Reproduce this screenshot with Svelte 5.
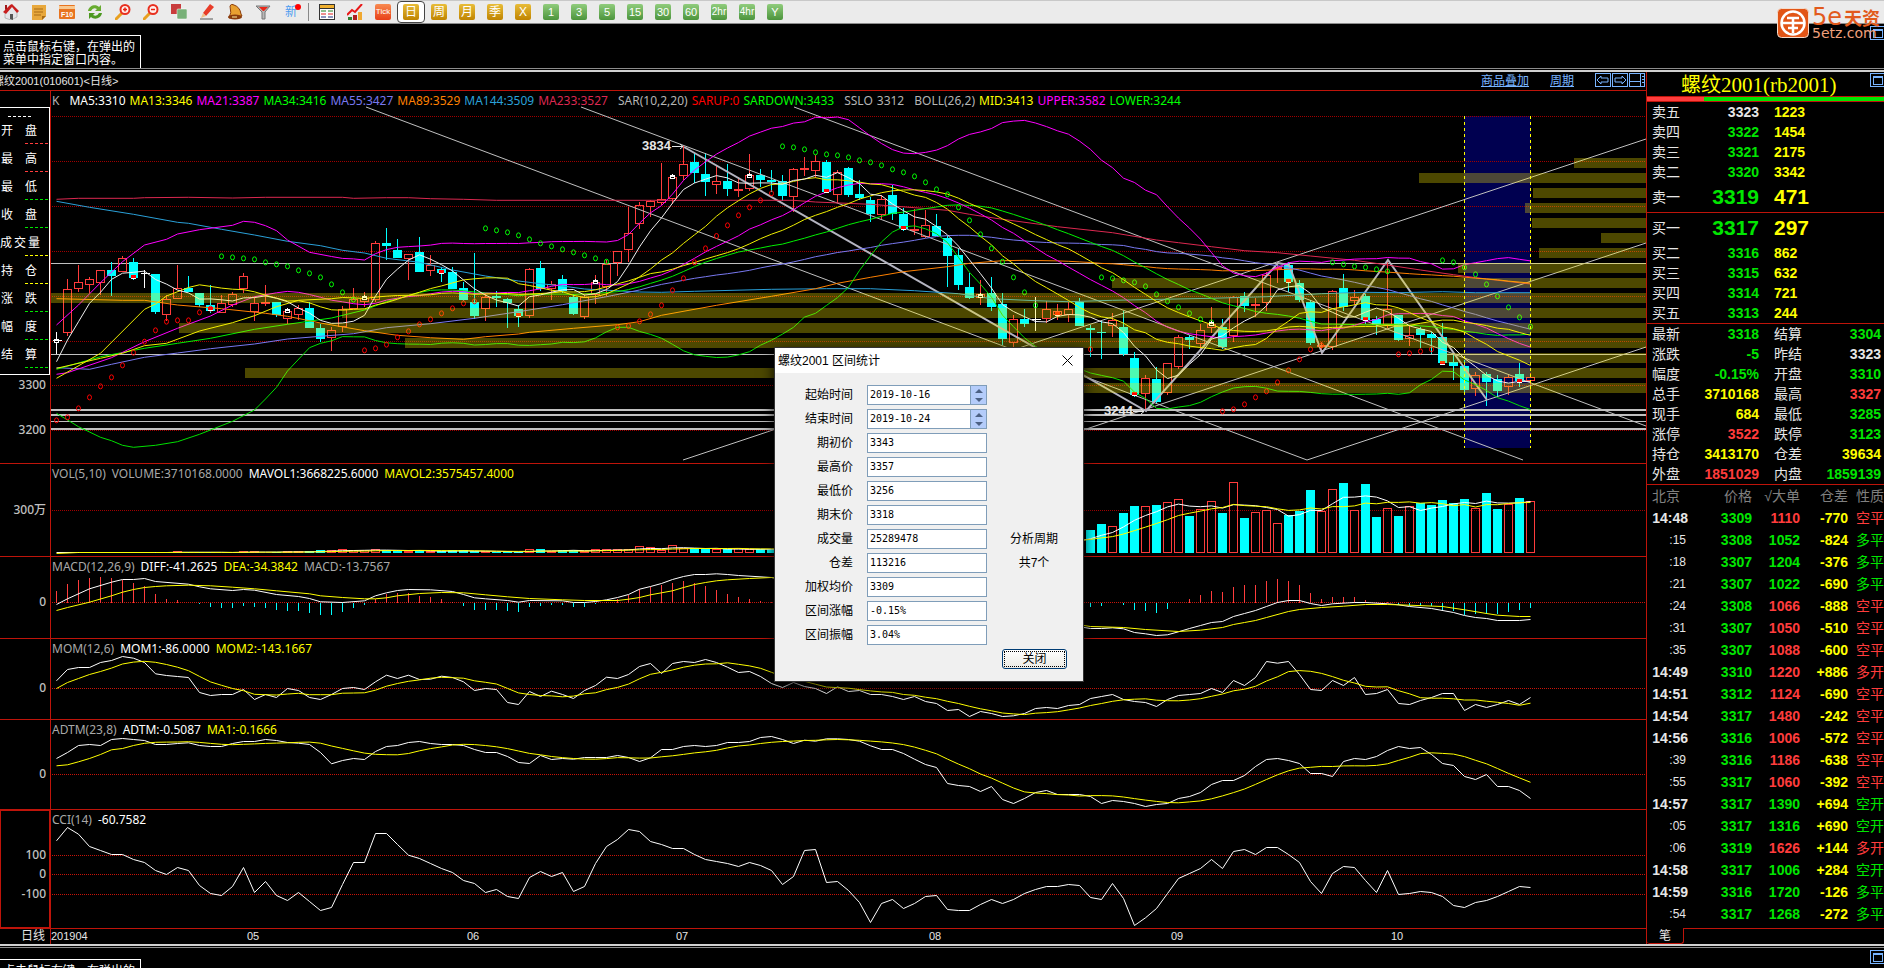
<script>
  // one bar every 11 units, heights are kept in thirds of a unit
  const STEP = 11
  const WIDTH = 1595
  const TOP = 11

  // u = up, d = down, w = unchanged; then high, body top, body bottom, low
  const candles = `w755,780,780,823 u597,628,758,768 u555,607,626,635 u590,598,616,640 u571,571,608,645
    d545,570,587,648 u528,535,575,575 d533,546,594,600 w571,580,580,624 d582,582,696,702
    u645,656,704,724 u555,625,656,656 d588,624,636,636 d640,640,674,682 d615,676,692,698
    u645,670,700,700 u636,643,676,682 u579,589,626,640 u652,670,695,722 u615,667,669,678
    d666,666,706,712 u690,694,716,732 u675,685,706,720 d666,684,744,744 d733,744,777,785
    u740,751,775,812 u678,688,742,756 u624,658,686,686 u636,655,665,680 u484,490,660,665
    d444,489,498,540 d477,510,535,535 u523,523,536,600 d471,516,576,576 u525,556,574,588
    d560,567,580,605 d562,576,628,628 d606,625,660,662 d519,666,708,716 u640,652,688,722
    d632,648,654,682 d654,657,668,744 d676,687,708,740 u563,568,707,714 d543,564,626,632
    u604,613,628,660 d585,598,634,640 d642,651,702,705 u642,652,710,718 u585,605,644,672
    u540,551,622,648 u514,514,550,588 u380,458,509,546 u366,376,433,446 u361,363,380,410
    u249,358,368,376 u285,292,358,372 u199,253,287,300 d220,246,279,310 d220,282,306,348
    u258,304,314,342 d253,303,327,348 u292,328,330,352 u222,284,328,332 d266,285,300,320
    d270,300,306,336 d285,302,348,362 u264,268,350,395 u232,264,266,288 u225,244,272,294
    d240,246,336,336 u270,277,344,368 d262,264,345,350 d300,342,353,360 d350,360,402,425
    u346,358,406,416 d316,345,402,420 d385,402,446,452 u388,446,452,466 u390,436,470,475
    d402,438,467,467 d467,474,528,621 d506,525,614,630 d580,621,654,656 u600,643,655,676
    d591,638,682,692 d640,672,777,795 u706,716,788,800 d686,717,732,742 w650,716,716,752
    u664,688,716,730 u673,694,704,720 u666,688,706,726 d655,666,738,738 d735,744,750,830
    d722,755,758,836 u700,720,738,770 d694,742,822,828 d815,834,944,950 u886,895,943,992
    d862,898,966,970 u850,850,940,946 u766,772,862,868 d764,771,780,806 u733,751,791,806
    u682,733,745,758 d718,741,801,806 u648,652,769,785 d636,648,678,696 u654,672,677,710
    u575,584,668,693 u545,562,568,608 d545,555,606,636 d600,609,660,666 d660,666,789,796
    u785,796,801,822 u630,634,800,810 d582,624,681,692 u630,652,662,675 d642,648,720,732
    d708,717,735,765 u545,688,735,745 d705,705,780,783 u736,766,776,798 d740,747,765,804
    d756,762,773,822 d729,771,850,855 d825,846,858,900 d840,858,930,944 u876,886,928,948
    d876,882,906,978 d886,898,933,948 u885,892,920,944 d850,882,902,920 u880,892,904,938`
    .trim().split(/\s+/).map(text => {
      const [high, top, bottom, low] = text.slice(1).split(',').map(Number)
      return { kind: text[0], high, top, bottom, low }
    })

  const closes = candles.map(c => (c.kind === 'u' ? c.top : c.bottom))

  const x = i => 5.5 + STEP * i
  const py = v => v / 3 - TOP
  const nums = text => text.trim().split(/[\s,]+/).map(Number)

  const toPath = (pairs, fy) => pairs.map(([i, v]) => `${x(i)},${fy(v).toFixed(1)}`).join(' ')
  const pairs = text => text.trim().split(/\s+/).map(p => p.split(':').map(Number))

  function average(list, i, n) {
    let sum = 0
    for (let k = i - n + 1; k <= i; k++) sum += list[k]
    return sum / n
  }

  // moving average, with a lead-in for the bars that have no full history
  function moving(list, n, lead, from = n - 1) {
    const out = pairs(lead)
    for (let i = from; i < list.length; i++) out.push([i, average(list, i, n)])
    return out
  }

  function band(side, lead) {
    const out = pairs(lead)
    for (let i = 25; i < closes.length; i++) {
      const mid = average(closes, i, 26)
      const spread = closes.slice(i - 25, i + 1).reduce((s, c) => s + (c - mid) ** 2, 0) / 26
      out.push([i, mid + side * 2 * Math.sqrt(spread)])
    }
    return out
  }

  const priceLines = [
    ['#dc2850', pairs('0:358 2:355 7:355 8:353 12:352 16:354 19:352 26:352 27:355 30:353 32:353 34:356 37:358 40:361 67:361 69:366 74:373 78:383 81:391 83:403 86:418 91:440 96:458 100:480 102:488 105:500 108:512 111:518 114:528 118:541 121:555 124:570 127:584 130:597 134:612')],
    ['#2aa0d8', pairs('0:364 3:382 7:403 11:427 12:430 15:448 18:465 21:484 24:497 26:511 28:519 30:535 33:547 36:570 39:588 42:603 44:611 46:618 48:627 53:636 55:637 58:634 65:628 70:626 74:626 78:632 82:641 85:656 89:662 92:665 96:661 105:655 110:650 115:641 119:637 122:638 126:635 129:638 134:638')],
    ['#ff8000', moving(closes, 89, '0:656 6:661 8:661 11:675 15:686 19:700 21:709 24:729 28:752 31:766 34:773 37:778 39:770 42:762 43:757 47:745 51:734 53:725 55:706 60:676 65:649 69:626 71:610 74:592 77:575 81:560 83:550 86:542 88:541', 91)],
    ['#7878f0', moving(closes, 55, '0:863 3:868 5:853 8:832 11:819 14:806 18:792 21:777 24:769 27:761 30:743 34:731 38:715 42:695 46:674 50:650 53:630')],
    ['#00f000', moving(closes, 34, '0:868 4:830 8:805 11:790 14:775 18:748 21:733 25:714 28:690 30:665')],
    ['#ff00ff', moving(closes, 21, '0:883 1:878 5:833 8:785 11:745 14:708 16:675 18:650')],
    ['#f0f000', moving(closes, 13, '0:895 4:820 8:688 9:672 10:648')],
    ['#f0f000', moving(closes, 26, '0:865 4:835 6:820 8:797 10:790 13:753 16:728 18:707 20:680 22:661')],
    ['#ff00ff', band(-1, '0:735 2:675 4:608 6:545 8:495 10:478 11:462 13:449 16:436 17:424 18:427 19:437 20:452 21:480 23:517')],
    ['#00e000', band(1, '0:1000 2:1040 4:1072 5:1082 6:1096 7:1102 9:1096 11:1085 13:1063 16:1024 18:990 19:957 20:922 21:873 23:803 24:790')],
    ['#f0f0f0', moving(closes, 5, '0:845 1:780 2:725 3:670')]
  ]

  // parabolic SAR runs: [first bar, colour, values]
  const sar = [
    [0, 'red', nums('1021 1012 985 952 919 892 856 818 785 751 725 721 721 697 686')],
    [15, 'lime', nums('529 532 535 538 547 553 559 571 580 592 613 637 659')],
    [28, 'red', nums('811 805 794 772 754 733 718 700 685 670 664')],
    [39, 'lime', nums('445 451 457 466 478 490 499 508 517 526 535 545')],
    [51, 'red', nums('742 738 724 703 676 631 595 547 505 468 436 406 382 361 340')],
    [66, 'lime', nums('199 202 208 217 223 226 232 241 247 256 268 277 289 307 328 343 382 421 463 505 545 592 637 676')],
    [94, 'red', nums('808')],
    [95, 'lime', nums('592 595 601 607 619 643 664 682 700 718 727')],
    [106, 'red', nums('994 988 973 952 934 907 871 838 808 796')],
    [116, 'lime', nums('547 553 559 562 568 574')],
    [122, 'red', nums('823 820 814 808')],
    [126, 'lime', nums('541 547 562 583 613 649 682 712 740')]
  ]

  // weekly marks: bar, height, red or white
  const marks = [
    [0, 782, 0], [7, 590, 1], [14, 688, 1], [21, 694, 0], [28, 653, 0], [35, 576, 1], [42, 704, 1],
    [49, 607, 0], [56, 292, 0], [63, 287, 0], [70, 333, 1], [77, 445, 1], [84, 648, 0], [91, 703, 1],
    [98, 943, 1], [105, 731, 0], [112, 604, 1], [119, 718, 1], [126, 848, 1], [133, 902, 1]
  ]

  // price distribution, left edge of every band
  const profile = [1523, 1368, 1482, 1474, 1481, 1550, 1488, 1407, 1061, 0, 291, 128, 354, 1389, 194, 849]
  const priceGrid = [25, 70, 115, 160, 205, 250, 294, 339]

  const levels = [[172, 1], [263, 1], [318, 2], [323, 2], [330, 1], [337, 2]]

  const trends = [
    [315, 16, 1256, 369], [530, 16, 1472, 369], [743, 16, 1595, 335],
    [632, 369, 1595, 48], [942, 369, 1595, 152], [1256, 369, 1595, 256]
  ]

  const swing = '633,56 1095,320 1227,172 1238,174 1271,262 1337,169 1436,309'

  const volumes = nums(`1 1 1 1 1 1 1 1 1 1 1 2 1 1 1 1 1 2 2 1 1 2 2 2 3 3 4 3 3 4 3 3 2 3 2 2 3 3 2 2 1
    2 1 4 4 2 3 3 2 4 4 4 4 7 6 3 8 5 5 4 4 4 5 4 4 4 4 5 5 6 6 7 7 8 8 8 9 9 10 10 11 12 12
    13 13 14 14 14 13 12 12 13 12 14 23 29 27 40 47 47 48 51 54 37 44 52 40 71 35 41 43 30 38 42
    63 42 64 70 43 69 36 45 37 47 50 48 53 50 54 45 60 44 49 55 52`).slice(-135)

  const macd = nums(`34 55 67 73 76 73 67 58 49 25 12 7 0 -5 -14 -17 -16 -11 -14 -16 -23 -26 -25 -31
    -38 -38 -29 -16 -8 10 25 28 28 19 16 10 2 -11 -22 -22 -22 -25 -29 -14 -11 -7 -8 -14 -13 -4 2
    10 24 40 46 52 58 64 58 49 37 25 16 10 4 1 0 0 0 0 0 0 0 0 0 0 0 0 0 0 0 0 0 0 0 0 0 0 0 0 0
    0 0 0 -13 -10 -2 -7 -22 -26 -31 -19 0 10 22 34 31 46 52 52 64 70 64 52 28 10 16 16 16 7 2 1
    -7 -11 -11 -11 -23 -26 -38 -34 -34 -35 -29 -23 -16`)

  const diff = pairs('0:-6 1:11 3:41 5:61 6:69 7:69 8:72 9:63 12:55 13:47 14:41 16:36 17:39 18:37 20:24 22:18 23:12 24:2 26:0 28:5 29:20 30:29 31:36 32:39 34:38 36:33 37:24 38:14 39:11 41:6 42:1 43:6 46:5 47:0 48:0 49:3 50:8 51:15 52:24 53:40 54:48 55:57 56:69 57:78 58:84 59:84 60:86 61:84 62:81 65:75 94:-78 95:-78 96:-76 97:-79 98:-90 99:-94 100:-99 101:-97 102:-88 103:-78 104:-69 105:-60 106:-57 107:-42 108:-33 109:-24 110:-12 111:0 112:6 113:6 114:-3 115:-9 116:-4 118:0 119:0 121:-4 122:-7 123:-12 125:-18 127:-30 128:-39 129:-45 130:-48 131:-54 133:-54 134:-51')
  const dea = pairs('0:-24 1:-15 3:1 5:20 6:31 7:39 8:45 9:48 10:50 12:52 14:50 16:46 18:41 20:35 23:26 24:20 26:15 28:11 29:11 30:14 31:20 33:27 35:30 37:29 39:23 41:17 43:12 46:8 48:6 51:6 52:10 53:15 54:23 55:29 56:35 57:45 58:54 59:60 60:65 61:68 63:72 65:75 94:-72 97:-75 99:-81 102:-87 104:-83 106:-75 107:-66 108:-60 109:-54 110:-45 112:-27 113:-21 115:-15 117:-11 119:-6 121:-6 123:-8 126:-12 128:-22 130:-33 131:-38 133:-42 134:-42')

  const mom = nums(`23 57 63 63 78 84 96 91 78 44 39 36 33 -12 -21 -18 -18 -3 -33 -18 -27 0 -6 -27 -33
    -18 0 3 -3 20 40 30 40 27 28 37 33 20 -6 0 -3 -42 -48 -9 -24 -8 -18 -30 -6 9 34 30 42 66 75 45
    75 81 78 87 78 64 48 51 36 15 3 18 6 0 -15 5 -9 -6 -18 -18 -24 -33 -24 -39 -45 -66 -63 -84 -69
    -75 -84 -82 -75 -60 -57 -60 -51 -48 -30 -24 -18 -33 -39 -42 -54 -33 -21 -18 -15 0 -12 24 9 33
    81 76 81 42 -3 -6 24 9 33 -18 -15 -3 -45 -48 -36 -27 -15 -15 -66 -48 -57 -48 -36 -48 -27`)

  const adtm = nums(`48 66 87 90 87 105 108 105 102 90 90 93 95 87 84 84 93 99 99 105 102 96 94 90 66 32
    42 48 45 69 84 87 96 99 93 90 90 87 75 66 66 54 36 33 57 45 48 46 51 51 51 57 51 39 50 75 75
    84 87 84 87 96 96 99 111 114 105 93 103 100 107 107 105 100 86 75 75 63 46 30 21 -27 -33 -36
    -51 -36 -75 -87 -72 -54 -48 -60 -60 -60 -66 -87 -78 -81 -87 -96 -90 -87 -72 -66 -54 -30 -18
    -18 -3 24 45 48 42 33 3 3 -6 39 48 45 54 72 84 78 81 60 33 27 -6 -15 0 -36 -36 -48 -72`)

  const cci = nums(`101 141 121 84 72 60 60 45 36 12 0 21 12 -33 -57 -63 -36 21 -54 -21 -63 -78 -54 -81
    -108 -99 -30 36 36 123 123 90 58 48 33 18 6 -18 -27 -54 -45 -66 -72 -9 9 -6 6 -51 -36 33 84
    105 135 129 99 90 78 78 60 45 39 33 24 36 27 12 -30 -6 72 75 -24 -21 -48 -84 -144 -87 -75
    -102 -87 -66 -63 -105 -108 -108 -90 -75 -87 -75 -57 -45 -36 -36 -30 -33 -69 -75 -27 -72 -153
    -130 -102 -57 -12 3 18 45 18 69 75 60 81 81 60 36 -21 -57 3 24 21 -18 -54 12 -60 -57 -51 -54
    -66 -93 -99 -84 -78 -66 -51 -36 -39`)

  const indexed = list => list.map((v, i) => [i, v])

  const indicators = [
    {
      id: 'vol', size: 92, grid: [46], ticks: [[46, '300万']],
      legend: [['VOL(5,10)', '#a8a8a8'], ['VOLUME:3710168.0000', '#a8a8a8'], ['MAVOL1:3668225.6000', '#fff'], ['MAVOL2:3575457.4000', '#ff0']],
      base: 89, unit: 1,
      lines: [['#fff', moving(volumes, 5, '0:1')], ['#ff0', moving(volumes, 10, '0:0 2:1')]]
    },
    {
      id: 'macd', size: 81, grid: [45], ticks: [[45, '0']],
      legend: [['MACD(12,26,9)', '#a8a8a8'], ['DIFF:-41.2625', '#fff'], ['DEA:-34.3842', '#ff0'], ['MACD:-13.7567', '#a8a8a8']],
      base: 45, unit: 3,
      lines: [['#fff', diff], ['#ff0', dea]]
    },
    {
      id: 'mom', size: 80, grid: [49], ticks: [[49, '0']],
      legend: [['MOM(12,6)', '#a8a8a8'], ['MOM1:-86.0000', '#fff'], ['MOM2:-143.1667', '#ff0']],
      base: 49, unit: 3,
      lines: [['#fff', indexed(mom)], ['#ff0', moving(mom, 6, '0:0 1:18 2:30 3:42 4:51')]]
    },
    {
      id: 'adtm', size: 89, grid: [54], ticks: [[54, '0']],
      legend: [['ADTM(23,8)', '#a8a8a8'], ['ADTM:-0.5087', '#fff'], ['MA1:-0.1666', '#ff0']],
      base: 54, unit: 3,
      lines: [['#fff', indexed(adtm)], ['#ff0', moving(adtm, 8, '0:26 1:29 2:38 3:48 4:60 5:74 6:78')]]
    },
    {
      id: 'cci', size: 118, grid: [45, 64, 84], ticks: [[45, '100'], [64, '0'], [84, '-100']],
      legend: [['CCI(14)', '#a8a8a8'], ['-60.7582', '#fff']],
      base: 64, unit: 3,
      lines: [['#fff', indexed(cci)]]
    }
  ]

  const mainLegend = [
    [['K', '#b4b4b4']],
    [['MA5:3310', '#fff'], ['MA13:3346', '#ff0'], ['MA21:3387', '#f0f'], ['MA34:3416', '#0f0'], ['MA55:3427', '#7878f0'],
      ['MA89:3529', '#ff8000'], ['MA144:3509', '#2aa0d8'], ['MA233:3527', '#dc2850']],
    [['SAR(10,2,20)', '#b4b4b4'], ['SARUP:0', '#f00'], ['SARDOWN:3433', '#0f0']],
    [['SSLO', '#b4b4b4'], ['3312', '#b4b4b4']],
    [['BOLL(26,2)', '#b4b4b4'], ['MID:3413', '#ff0'], ['UPPER:3582', '#f0f'], ['LOWER:3244', '#0f0']]
  ]

  const quoteBox = [
    ['开盘', '#ff3c3c'], ['最高', '#ff3c3c'], ['最低', '#00e600'], ['收盘', '#00e600'], ['成交量', '#ff0'],
    ['持仓', '#ff0'], ['涨跌', '#00e600'], ['幅度', '#00e600'], ['结算', '#00e600']
  ]

  const months = [['201904', 0], ['05', 196], ['06', 416], ['07', 625], ['08', 878], ['09', 1120], ['10', 1340]]

  const asks = [['卖五', 3323, 1223, 'plain'], ['卖四', 3322, 1454, 'down'], ['卖三', 3321, 2175, 'down'], ['卖二', 3320, 3342, 'down'], ['卖一', 3319, 471, 'down']]
  const bids = [['买一', 3317, 297], ['买二', 3316, 862], ['买三', 3315, 632], ['买四', 3314, 721], ['买五', 3313, 244]]

  const stats = [
    ['最新', '3318', 'down', '结算', '3304', 'down'],
    ['涨跌', '-5', 'down', '昨结', '3323', 'plain'],
    ['幅度', '-0.15%', 'down', '开盘', '3310', 'down'],
    ['总手', '3710168', 'amount', '最高', '3327', 'up'],
    ['现手', '684', 'amount', '最低', '3285', 'down'],
    ['涨停', '3522', 'up', '跌停', '3123', 'down'],
    ['持仓', '3413170', 'amount', '仓差', '39634', 'amount'],
    ['外盘', '1851029', 'up', '内盘', '1859139', 'down']
  ]

  const ticks = [
    ['14:48', 3309, 1110, '-770', '空平', 'up'],
    [':15', 3308, 1052, '-824', '多平', 'down'],
    [':18', 3307, 1204, '-376', '多平', 'down'],
    [':21', 3307, 1022, '-690', '多平', 'down'],
    [':24', 3308, 1066, '-888', '空平', 'up'],
    [':31', 3307, 1050, '-510', '空平', 'up'],
    [':35', 3307, 1088, '-600', '空平', 'up'],
    ['14:49', 3310, 1220, '+886', '多开', 'up'],
    ['14:51', 3312, 1124, '-690', '空平', 'up'],
    ['14:54', 3317, 1480, '-242', '空平', 'up'],
    ['14:56', 3316, 1006, '-572', '空平', 'up'],
    [':39', 3316, 1186, '-638', '空平', 'up'],
    [':55', 3317, 1060, '-392', '空平', 'up'],
    ['14:57', 3317, 1390, '+694', '空开', 'down'],
    [':05', 3317, 1316, '+690', '空开', 'down'],
    [':06', 3319, 1626, '+144', '多开', 'up'],
    ['14:58', 3317, 1006, '+284', '空开', 'down'],
    ['14:59', 3316, 1720, '-126', '多平', 'down'],
    [':54', 3317, 1268, '-272', '多平', 'down']
  ]

  let dates = [
    { id: 'from', label: '起始时间', value: '2019-10-16' },
    { id: 'to', label: '结束时间', value: '2019-10-24' }
  ]
  const results = [
    ['期初价', '3343'], ['最高价', '3357'], ['最低价', '3256'], ['期末价', '3318'], ['成交量', '25289478'],
    ['仓差', '113216'], ['加权均价', '3309'], ['区间涨幅', '-0.15%'], ['区间振幅', '3.04%']
  ]

  const periods = ['日', '周', '月', '季', 'X']
  const minutes = ['1', '3', '5', '15', '30', '60', '2hr', '4hr', 'Y']

  let period = '日'
  let open = true

  function shiftDay(row, days) {
    const day = new Date(row.value)
    day.setDate(day.getDate() + days)
    row.value = day.toISOString().slice(0, 10)
    dates = dates
  }
</script>

<div class="app">
  <header class="toolbar">
    <button class="tool" aria-label="首页">
      <svg viewBox="0 0 16 16"><path d="M2 8v6l6 2 6-3V7L9 2z" fill="#e4e4e8" stroke="#888" stroke-width=".5"/><path d="M0 8 7 1l2-1 7 7-2 2-5-6-6 7z" fill="#c81e1e"/><path d="M2 1h2v4L2 6z" fill="#a01818"/><path d="M7 10h3v6l-3-1z" fill="#555"/></svg>
    </button>
    <button class="tool" aria-label="资讯">
      <svg viewBox="0 0 16 16"><path d="M1 1h14v11l-4 4H1z" fill="#e8a83c"/><path d="M15 12h-4v4z" fill="#a86a14"/><path d="M3 5h9M3 8h9M3 11h7" stroke="#a86a14"/></svg>
    </button>
    <button class="tool" aria-label="F10">
      <svg viewBox="0 0 16 16"><rect y="1" width="16" height="14" rx="1" fill="#e87420"/><path d="M0 2h16v3H0z" fill="#f8c890"/><text x="8" y="13" class="tiny">F10</text></svg>
    </button>
    <button class="tool" aria-label="刷新">
      <svg viewBox="0 0 16 16"><path d="M1 7C2 1 9 0 12 3l2-2v6H8l2-2Q6 3 4 7z" fill="#68ac30"/><path d="M15 9c-1 6-8 7-11 4l-2 2V9h6l-2 2q4 2 6-2z" fill="#4c9820"/></svg>
    </button>
    {#each ['放大', '缩小'] as name}
      <button class="tool" aria-label={name}>
        <svg viewBox="0 0 16 16"><path d="m1 15 6-6" stroke="#e8a020" stroke-width="3" stroke-linecap="round"/><circle cx="10" cy="5.500" r="4.500" fill="#fff0ec" stroke="#e83020" stroke-width="2"/><path d={name === '放大' ? 'M8 5.500h4M10 3.500v4' : 'M8 5.500h4'} stroke="#e82010" stroke-width="1.500"/></svg>
      </button>
    {/each}
    <button class="tool" aria-label="叠加">
      <svg viewBox="0 0 16 16"><rect width="10" height="10" fill="#c83c3c"/><rect x="6" y="5" width="10" height="10" rx="1" fill="#78b078" stroke="#fff" stroke-width=".5"/></svg>
    </button>
    <button class="tool" aria-label="画线">
      <svg viewBox="0 0 16 16"><path d="M4 9 11 0l4 3-8 9z" fill="#e83c28"/><path d="m4 9 3 3-5 2z" fill="#f0c088"/><path d="M1 15h13" stroke="#888" stroke-width="1.500"/></svg>
    </button>
    <button class="tool" aria-label="预警">
      <svg viewBox="0 0 16 16"><path d="M3 2q1-3 4-1 6 2 7 9l1 2-13 2q3-5 1-12z" fill="#e8a030" stroke="#8a3c0c"/><ellipse cx="8" cy="13" rx="7" ry="2.500" fill="#8a3c0c"/><path d="M5 13h5" stroke="#fff0a0"/></svg>
    </button>
    <button class="tool" aria-label="筛选">
      <svg viewBox="0 0 16 16"><path d="M1 2h14l-5 6v7H7V8z" fill="#b8b8b8" stroke="#777"/><path d="M4 3h9L9 7H8z" fill="#e82818"/></svg>
    </button>
    <button class="tool news">新<i></i></button>
    <span class="divider"></span>
    <button class="tool" aria-label="报价">
      <svg viewBox="0 0 16 16"><rect x=".5" y=".5" width="15" height="15" fill="#fff" stroke="#333"/><path d="M1 1h14v3H1z" fill="#f0b030"/><path d="M1 4.500h14" stroke="#333"/><path d="M2 7h5M9 7h5" stroke="#208020"/><path d="M2 10h5M9 10h5" stroke="#e02020"/><path d="M2 13h5M9 13h5" stroke="#203080"/></svg>
    </button>
    <button class="tool" aria-label="走势">
      <svg viewBox="0 0 16 16"><path d="M1 13h4v3H1z" fill="#308030"/><path d="M6 11h4v5H6z" fill="#b02020"/><path d="M11 8h4v8h-4z" fill="#f0a830"/><path d="m0 11 5-5 3 2 7-8" fill="none" stroke="#e81818" stroke-width="2"/></svg>
    </button>
    <button class="tool"><span class="chip tick">Tick</span></button>
    {#each periods as name}
      <button class="tool" class:active={period === name} on:click={() => (period = name)}>
        <span class="chip gold">{name}</span>
      </button>
    {/each}
    {#each minutes as name}
      <button class="tool" class:active={period === name} on:click={() => (period = name)}>
        <span class="chip green" class:long={name.length > 2}>{name}</span>
      </button>
    {/each}
  </header>

  <div class="strip top">
    <p class="hint">点击鼠标右键，在弹出的<br>菜单中指定窗口内容。</p>
    <button class="restore" aria-label="还原"></button>
  </div>

  <div class="splitter"></div>

  <main class="work">
    <section class="charts">
      <div class="head">
        <span class="symbol">螺纹2001(010601)&lt;日线&gt;</span>
        <nav class="links">
          <a href="/">商品叠加</a>
          <a href="/">周期</a>
          <span class="boxes">
            <button aria-label="向左"><svg viewBox="0 0 14 12"><path d="M1 6 5 2v2h7v4H5v2z"/></svg></button>
            <button aria-label="向右"><svg viewBox="0 0 14 12"><path d="M13 6 9 2v2H2v4h7v2z"/></svg></button>
            <button aria-label="分栏"><svg viewBox="0 0 14 12"><path d="M0 7.500h10M10.500 0v12M12 2.500h2M12 5.500h2M12 8.500h2"/></svg></button>
          </span>
        </nav>
      </div>

      <div class="panel" style="flex-grow: 372">
        <div class="axis">
          <div class="quotes">
            <span class="stamp"></span>
            {#each quoteBox as [name, color]}
              <div class="quote" class:wide={name.length > 2}>
                <span class="name">{#each name as letter}<b>{letter}</b>{/each}</span>
                <span class="dash" style="border-color: {color}"></span>
              </div>
            {/each}
          </div>
          <span class="mark" style="top: {294 / 372 * 100}%">3300</span>
          <span class="mark" style="top: {339 / 372 * 100}%">3200</span>
        </div>
        <div class="plot">
          <svg viewBox="0 0 {WIDTH} 372" preserveAspectRatio="none">
            <rect x="1413" y="25" width="67" height="332" fill="#000050"/>
            <g class="crisp">
              {#each priceGrid as y}
                <line x1="1" x2={WIDTH} y1={y + .5} y2={y + .5} class="grid dim"/>
              {/each}
              {#each levels as [y, h]}
                <rect x="0" {y} width={WIDTH} height={h} fill="#c0c0c0"/>
              {/each}
              {#each candles as c, i}
                {@const top = Math.round(py(c.top))}
                {@const height = Math.max(1, Math.round(py(c.bottom)) - top)}
                {#if c.kind === 'u'}
                  <path d="M{x(i)} {py(c.high)}V{top}M{x(i)} {top + height}V{py(c.low)}" stroke="#ff3c3c"/>
                  <rect x={x(i) - 4} y={top + .5} width="8" height={Math.max(1, height - 1)} fill="none" stroke="#ff3c3c"/>
                {:else if c.kind === 'd'}
                  <path d="M{x(i)} {py(c.high)}V{py(c.low)}" stroke="#0ff"/>
                  <rect x={x(i) - 4.5} y={top} width="9" {height} fill="#0ff"/>
                {:else}
                  <path d="M{x(i)} {py(c.high)}V{py(c.low)}M{x(i) - 4} {top + .5}h9" stroke="#fff"/>
                {/if}
              {/each}
            </g>
            {#each trends as [x1, y1, x2, y2]}
              <line {x1} {y1} {x2} {y2} class="trend"/>
            {/each}
            <polyline points={swing} class="swing"/>
            {#each priceLines as [stroke, line]}
              <polyline points={toPath(line, py)} {stroke} class="curve"/>
            {/each}
            {#each sar as [start, stroke, values]}
              {#each values as v, k}
                <ellipse cx={x(start + k)} cy={py(v)} rx="2" ry="2.500" fill="none" {stroke}/>
              {/each}
            {/each}
            <g class="crisp">
              {#each marks as [i, v, hot]}
                {@const y = Math.round(py(v))}
                <rect x={x(i) - 2.5} y={y - 2} width="5" height="4" fill="#fff"/>
                {#if hot}
                  <rect x={x(i) - 2.5} y={y - 2} width="5" height="3" fill="#f00"/>
                {:else}
                  <rect x={x(i) - .5} y={y - 3} width="1" height="1" fill="#fff"/>
                  <rect x={x(i) - 1.5} {y} width="3" height="1" fill="#000"/>
                {/if}
              {/each}
            </g>
            {#each profile as left, k}
              <rect x={left} y={67 + 15 * k} width={WIDTH - left} height="10" class="band"/>
            {/each}
            <path d="M1413.500 25v332M1479.500 25v332" stroke="#ff0" stroke-dasharray="3 3" class="crisp"/>
            <path d="M621 55.500h11M629 53l3 2.500-3 2.500M1082 320.500h11M1090 318l3 2.500-3 2.500" class="arrow"/>
          </svg>
          <span class="peak" style="left: {591 / WIDTH * 100}%; top: {55 / 372 * 100}%">3834</span>
          <span class="peak" style="left: {1053 / WIDTH * 100}%; top: {320 / 372 * 100}%">3244</span>
          <div class="legend">
            {#each mainLegend as group}
              <span class="group">{#each group as [text, color]}<span style="color: {color}">{text}</span>{/each}</span>
            {/each}
          </div>
        </div>
      </div>

      {#each indicators as panel}
        <div class="panel" class:selected={panel.id === 'cci'} style="flex-grow: {panel.size}">
          <div class="axis">
            {#each panel.ticks as [y, text]}
              <span class="mark" style="top: {y / panel.size * 100}%">{text}</span>
            {/each}
          </div>
          <div class="plot">
            <svg viewBox="0 0 {WIDTH} {panel.size}" preserveAspectRatio="none">
              <g class="crisp">
                {#each panel.grid as y}
                  <line x1="1" x2={WIDTH} y1={y + .5} y2={y + .5} class="grid" class:dim={panel.id === 'vol'}/>
                {/each}
                {#if panel.id === 'vol'}
                  {#each volumes as v, i}
                    {#if candles[i].kind === 'd'}
                      <rect x={x(i) - 4.5} y={89 - v} width="9" height={v} fill="#0ff"/>
                    {:else}
                      <rect x={x(i) - 4} y={89.5 - v} width="8" height={Math.max(0, v - 1)} fill="none" stroke="#ff3c3c"/>
                    {/if}
                  {/each}
                {:else if panel.id === 'macd'}
                  {#each macd as v, i}
                    {#if v}
                      <path d="M{x(i)} 45.500v{-v / 3}" stroke={v > 0 ? '#ff3c3c' : '#0ff'}/>
                    {/if}
                  {/each}
                {/if}
              </g>
              {#each panel.lines as [stroke, line]}
                <polyline points={toPath(line, v => panel.base + .5 - v / panel.unit)} {stroke} class="curve"/>
              {/each}
            </svg>
            <div class="legend">
              <span class="group loose">{#each panel.legend as [text, color]}<span style="color: {color}">{text}</span>{/each}</span>
            </div>
          </div>
        </div>
      {/each}

      <div class="dates">
        <span class="axis">日线</span>
        <div class="plot">
          {#each months as [text, left]}
            <span style="left: {left / WIDTH * 100}%">{text}</span>
          {/each}
        </div>
      </div>
    </section>

    <aside class="side">
      <h1>螺纹<span>2001(rb2001)</span><button class="restore" aria-label="还原"></button></h1>
      <div class="ratio"><i></i></div>
      <table class="depth">
        <tbody>
          {#each asks as [name, price, lots, tone], k}
            <tr class:best={k === 4}><th>{name}</th><td class={tone}>{price}</td><td class="lots">{lots}</td></tr>
          {/each}
        </tbody>
      </table>
      <table class="depth">
        <tbody>
          {#each bids as [name, price, lots], k}
            <tr class:best={k === 0}><th>{name}</th><td class="down">{price}</td><td class="lots">{lots}</td></tr>
          {/each}
        </tbody>
      </table>
      <table class="stats">
        <tbody>
          {#each stats as [a, va, ta, b, vb, tb]}
            <tr><th>{a}</th><td class={ta}>{va}</td><th>{b}</th><td class={tb}>{vb}</td></tr>
          {/each}
        </tbody>
      </table>
      <table class="tape">
        <thead>
          <tr><th>北京</th><th>价格</th><th>√大单</th><th>仓差</th><th>性质</th></tr>
        </thead>
        <tbody>
          {#each ticks as [time, price, lots, change, nature, tone]}
            <tr>
              <td class:minor={time.length === 3}>{time}</td>
              <td class="down">{price}</td>
              <td class={tone}>{lots}</td>
              <td class="amount">{change}</td>
              <td class={tone}>{nature}</td>
            </tr>
          {/each}
        </tbody>
      </table>
      <div class="tabs"><button>笔</button><span></span></div>
    </aside>
  </main>

  <div class="splitter bottom"></div>

  <div class="strip">
    <p class="hint">点击鼠标右键，在弹出的<br>菜单中指定窗口内容。</p>
    <button class="restore" aria-label="还原"></button>
  </div>

  <div class="logo">
    <svg viewBox="0 0 32 30" width="32" height="30">
      <rect x=".5" y=".5" width="31" height="29" rx="4" fill="#e25516" stroke="#f4dccc"/>
      <circle cx="16" cy="15" r="11.500" fill="none" stroke="#fff" stroke-width="2.500"/>
      <path d="M10 10h12M5 15h22M16 10v15M11 20h10" fill="none" stroke="#fff" stroke-width="2.500"/>
    </svg>
    <div>
      <p class="brand"><span>5e</span>天资</p>
      <p class="site">5etz.com</p>
    </div>
  </div>

  {#if open}
    <div class="dialog" role="dialog" aria-label="螺纹2001 区间统计">
      <div class="caption">
        <span>螺纹2001 区间统计</span>
        <button aria-label="关闭窗口" on:click={() => (open = false)}>
          <svg viewBox="0 0 11 11" width="11" height="11"><path d="m.5.5 10 10M10.500.5l-10 10" stroke="#000" fill="none"/></svg>
        </button>
      </div>
      <div class="form">
        {#each dates as row}
          <div class="row">
            <label for={row.id}>{row.label}</label>
            <span class="field">
              <input id={row.id} bind:value={row.value}>
              <span class="spin">
                <button aria-label="后一天" on:click={() => shiftDay(row, 1)}><svg viewBox="0 0 8 4"><path d="m0 4 4-4 4 4z"/></svg></button>
                <button aria-label="前一天" on:click={() => shiftDay(row, -1)}><svg viewBox="0 0 8 4"><path d="m0 0 4 4 4-4z"/></svg></button>
              </span>
            </span>
          </div>
        {/each}
        {#each results as [name, value], k}
          <div class="row">
            <label for="result{k}">{name}</label>
            <span class="field"><input id="result{k}" readonly {value}></span>
            {#if k === 4}<span class="note">分析周期</span>{/if}
            {#if k === 5}<span class="note">共7个</span>{/if}
          </div>
        {/each}
      </div>
      <button class="close" on:click={() => (open = false)}><span>关闭</span></button>
    </div>
  {/if}
</div>

<style>
  :global(body) {
    margin: 0;
    background: #000;
  }

  .app {
    position: relative;
    display: flex;
    flex-direction: column;
    height: 100vh;
    min-height: 720px;
    overflow: hidden;
    background: #000;
    color: #e6e6e6;
    font: 12px/14px "Liberation Sans", "Noto Sans CJK SC", sans-serif;
  }

  p,
  h1 {
    margin: 0;
  }

  button {
    padding: 0;
    border: 0;
    background: none;
    color: inherit;
    font: inherit;
  }

  .crisp {
    shape-rendering: crispEdges;
  }

  /* toolbar */
  .toolbar {
    display: flex;
    flex: none;
    box-sizing: border-box;
    height: 24px;
    padding-right: 120px;
    margin-left: -3px;
    border-top: 1px solid #c8c8c8;
    border-bottom: 1px solid #8c8c8c;
    background: #ebebeb;
  }

  .tool {
    position: relative;
    display: flex;
    flex: none;
    align-items: center;
    justify-content: center;
    box-sizing: border-box;
    width: 28px;
    height: 22px;
  }

  .tool svg {
    width: 16px;
    height: 16px;
  }

  .tool.active {
    border: 1px solid #444;
    border-radius: 4px;
    background: #fff;
  }

  .tiny {
    fill: #fff;
    font: bold 7px "Liberation Sans", sans-serif;
    text-anchor: middle;
  }

  .news {
    color: #4c9cf0;
  }

  .news i {
    position: absolute;
    top: 3px;
    right: 4px;
    width: 6px;
    height: 6px;
    border-radius: 50%;
    background: #f00;
  }

  .divider {
    width: 1px;
    height: 18px;
    margin: 2px 4px 0 3px;
    background: #888;
  }

  .chip {
    width: 16px;
    height: 16px;
    border-radius: 2px;
    color: #fff;
    font: 11px/16px "Liberation Sans", "Noto Sans CJK SC", sans-serif;
    text-align: center;
    white-space: nowrap;
  }

  .tick {
    background: linear-gradient(#f88a50, #e84018);
    font-size: 8px;
  }

  .gold {
    background: linear-gradient(#e8bc38, #c08400);
    font-size: 12px;
  }

  .green {
    background: linear-gradient(#90cc7c, #4c943c);
  }

  .green.long {
    font-size: 10px;
  }

  /* empty windows above and below */
  .strip {
    position: relative;
    flex: none;
    height: 20px;
    overflow: hidden;
  }

  .strip.top {
    height: 44px;
  }

  .hint {
    box-sizing: border-box;
    width: 141px;
    height: 33px;
    padding: 5px 0 0 3px;
    margin-top: 11px;
    border: solid #fff;
    border-width: 1px 1px 0 0;
    color: #fff;
    line-height: 13px;
    white-space: nowrap;
  }

  .restore {
    position: absolute;
    top: 2px;
    right: -2px;
    box-sizing: border-box;
    width: 16px;
    height: 14px;
    border: 1px solid #78b4ff;
  }

  .restore::after {
    content: '';
    position: absolute;
    top: 2px;
    left: 2px;
    width: 8px;
    height: 6px;
    border: 1px solid #78b4ff;
    border-top-width: 2px;
  }

  .splitter {
    flex: none;
    height: 1px;
    border-top: 1px solid #8c8c8c;
    border-bottom: 2px solid #d0d0d0;
  }

  .splitter.bottom {
    border-top: 2px solid #d0d0d0;
    border-bottom: 1px solid #8c8c8c;
  }

  .work {
    display: grid;
    flex: 1;
    grid-template-columns: minmax(0, 1fr) 238px;
    min-height: 0;
  }

  /* charts */
  .charts {
    display: flex;
    flex-direction: column;
    min-height: 0;
  }

  .head {
    display: flex;
    flex: none;
    justify-content: space-between;
    height: 18px;
    border-bottom: 1px solid #be140a;
    line-height: 18px;
  }

  .symbol {
    margin-left: -7px;
    font-size: 11px;
  }

  .links {
    display: flex;
    gap: 21px;
    padding-right: 1px;
  }

  .links a {
    color: #78b4ff;
  }

  .boxes {
    display: flex;
    gap: 1px;
    padding-top: 1px;
  }

  .boxes button {
    box-sizing: border-box;
    width: 16px;
    height: 14px;
    border: 1px solid #78b4ff;
  }

  .boxes svg {
    display: block;
    width: 14px;
    height: 12px;
    fill: none;
    stroke: #78b4ff;
  }

  /* every panel grows by its own share on top of the 1px rule */
  .panel {
    display: flex;
    flex-basis: 0;
    flex-shrink: 1;
    box-sizing: border-box;
    min-height: 0;
    border-bottom: 1px solid #be140a;
  }

  .axis {
    position: relative;
    flex: none;
    width: 50px;
    border-right: 1px solid #be140a;
    color: #c0c0c0;
  }

  .selected .axis {
    box-shadow: inset 0 0 0 1px #be140a;
  }

  .plot {
    position: relative;
    flex: 1;
    min-width: 0;
  }

  .plot svg {
    display: block;
    position: absolute;
    width: 100%;
    height: 100%;
  }

  .mark {
    position: absolute;
    right: 4px;
    font: 500 12px/14px "Noto Sans", "Noto Sans CJK SC", sans-serif;
    transform: translateY(-50%);
    white-space: nowrap;
  }

  .grid {
    stroke: #c8140a;
    stroke-dasharray: 1 1;
  }

  .grid.dim {
    stroke: #a00000;
  }

  .curve {
    fill: none;
    stroke-width: 1;
  }

  .trend {
    stroke: #c0c0c0;
  }

  .swing {
    fill: none;
    stroke: #b4b4c0;
    stroke-width: 2;
  }

  .band {
    fill: rgba(255, 240, 0, .3);
  }

  .arrow {
    fill: none;
    stroke: #e6e6e6;
  }

  .peak {
    position: absolute;
    font: bold 13px/14px "Liberation Sans", sans-serif;
    transform: translateY(-50%);
  }

  .legend {
    position: absolute;
    top: 2px;
    left: 1px;
    display: flex;
    gap: 10px;
    font: 12px/16px "Noto Sans", sans-serif;
    white-space: nowrap;
  }

  .group {
    display: flex;
    gap: 4px;
  }

  .group.loose {
    gap: 6px;
  }

  .quotes {
    box-sizing: border-box;
    height: 268px;
    margin-top: 16px;
    border: solid #fff;
    border-width: 1px 1px 1px 0;
    color: #fff;
  }

  .stamp {
    display: block;
    width: 23px;
    height: 8px;
    margin-left: 8px;
    border-bottom: 1px dashed #fff;
  }

  .quote {
    display: flex;
    flex-direction: column;
    height: 28px;
  }

  .name {
    display: flex;
    justify-content: space-between;
    width: 36px;
    padding: 7px 0 5px 1px;
  }

  .wide .name {
    width: 40px;
    padding-left: 0;
  }

  .name b {
    font-weight: normal;
  }

  .dash {
    width: 23px;
    margin-left: 25px;
    border-top: 1px dashed;
  }

  .dates {
    display: flex;
    flex: none;
    height: 15px;
    font-size: 11px;
    line-height: 14px;
  }

  .dates .axis {
    box-sizing: border-box;
    width: 51px;
    padding-right: 5px;
    color: #e6e6e6;
    font-size: 12px;
    text-align: right;
  }

  .dates .plot span {
    position: absolute;
  }

  /* quote side */
  .side {
    display: flex;
    flex-direction: column;
    min-width: 0;
    border-left: 1px solid #be140a;
  }

  h1 {
    position: relative;
    flex: none;
    height: 24px;
    padding-left: 34px;
    color: #ff0;
    font: 20px/24px "Noto Sans CJK SC", sans-serif;
    white-space: nowrap;
  }

  h1 span {
    font-family: "Liberation Serif", serif;
    font-size: 21px;
  }

  h1 .restore {
    top: 1px;
  }

  .ratio {
    flex: none;
    height: 4px;
    border: solid #be140a;
    border-width: 1px 0;
    background: #00e600;
  }

  .ratio i {
    display: block;
    width: 24%;
    height: 4px;
    background: #ff3c3c;
  }

  table {
    flex: none;
    width: 100%;
    border-spacing: 0;
    table-layout: fixed;
  }

  td,
  th {
    box-sizing: border-box;
    height: 20px;
    padding: 0;
    font: bold 14px/20px "Liberation Sans", "Noto Sans CJK SC", sans-serif;
    text-align: right;
    white-space: nowrap;
  }

  th {
    padding-left: 5px;
    font-weight: normal;
    text-align: left;
  }

  .depth,
  .stats {
    border-bottom: 1px solid #be140a;
  }

  .depth th,
  .stats th:first-child {
    width: 48px;
  }

  .depth td:nth-child(2),
  .stats td:nth-child(2) {
    width: 64px;
  }

  .depth .lots {
    padding-left: 15px;
    text-align: left;
  }

  .best td,
  .best th {
    height: 30px;
    line-height: 30px;
  }

  .best td {
    font-size: 21px;
  }

  .stats th:nth-child(3) {
    width: 58px;
    padding-left: 15px;
  }

  .stats td:last-child {
    padding-right: 3px;
  }

  .plain { color: #e6e6e6; }
  .down { color: #00e600; }
  .up { color: #ff3c3c; }
  .amount,
  .lots { color: #ff0; }

  .tape th {
    padding: 0;
    color: #808080;
    text-align: right;
  }

  .tape td,
  .tape th {
    height: 22px;
    line-height: 22px;
  }

  .tape th:first-child {
    width: 41px;
    padding-left: 5px;
    text-align: left;
  }

  .tape th:nth-child(2) { width: 64px; }
  .tape th:nth-child(3) { width: 48px; }
  .tape th:nth-child(4) { width: 48px; }

  .tape td:last-child,
  .tape th:last-child {
    padding-left: 8px;
    font-weight: normal;
    text-align: left;
  }

  .tape .minor {
    padding-right: 2px;
    font-size: 12px;
    font-weight: normal;
  }

  .tabs {
    display: flex;
    flex: none;
    height: 16px;
    margin-top: auto;
  }

  .tabs button {
    width: 37px;
    border-right: 1px solid #be140a;
    border-bottom: 1px solid #be140a;
    border-radius: 0 0 3px 3px;
    line-height: 14px;
  }

  .tabs span {
    flex: 1;
    border-top: 1px solid #be140a;
  }

  .logo {
    position: absolute;
    top: 8px;
    right: 4px;
    display: flex;
    gap: 3px;
    color: #e25a1c;
  }

  .brand {
    display: flex;
    font: bold 18px/18px "Noto Sans CJK SC", sans-serif;
  }

  .brand span {
    width: 32px;
    font: 24px/18px "DejaVu Sans", sans-serif;
  }

  .site {
    color: #f0a07c;
    font: 14px/14px "DejaVu Sans", sans-serif;
  }

  /* dialog */
  .dialog {
    position: absolute;
    top: 348px;
    left: 775px;
    display: flex;
    flex-direction: column;
    box-sizing: border-box;
    width: 308px;
    height: 333px;
    background: #f0f0f0;
    box-shadow: 0 0 0 1px #333, 0 4px 14px #000;
    color: #000;
  }

  .caption {
    display: flex;
    align-items: center;
    justify-content: space-between;
    height: 25px;
    padding: 0 10px 0 3px;
    background: #fff;
  }

  .caption button {
    display: flex;
  }

  .form {
    display: flex;
    flex-direction: column;
    gap: 4px;
    padding-top: 12px;
  }

  .row {
    display: grid;
    grid-template-columns: 78px 120px 1fr;
    align-items: center;
    column-gap: 14px;
  }

  .row label {
    text-align: right;
  }

  .field {
    display: flex;
    box-sizing: border-box;
    height: 20px;
    border: 1px solid #7f9db9;
    background: #fff;
  }

  .field input {
    flex: 1;
    min-width: 0;
    padding: 0 2px;
    border: 0;
    outline: 0;
    background: none;
    font: 10px/16px "DejaVu Sans Mono", monospace;
  }

  .spin {
    display: flex;
    flex-direction: column;
    width: 15px;
    border-left: 1px solid #7f9db9;
    background: #b4ccfa;
  }

  .spin button {
    display: flex;
    flex: 1;
    align-items: center;
    justify-content: center;
  }

  .spin svg {
    width: 8px;
    height: 4px;
    fill: #4c6184;
  }

  .note {
    width: 50px;
    text-align: center;
    margin-left: 8px;
  }

  .close {
    align-self: flex-end;
    width: 65px;
    height: 20px;
    padding: 1px;
    margin: 4px 16px 0 0;
    border: 1px solid #003c74;
    border-radius: 3px;
    background: linear-gradient(#fff, #ecebe5);
  }

  .close span {
    display: block;
    border: 1px dotted #000;
    line-height: 14px;
  }
</style>
